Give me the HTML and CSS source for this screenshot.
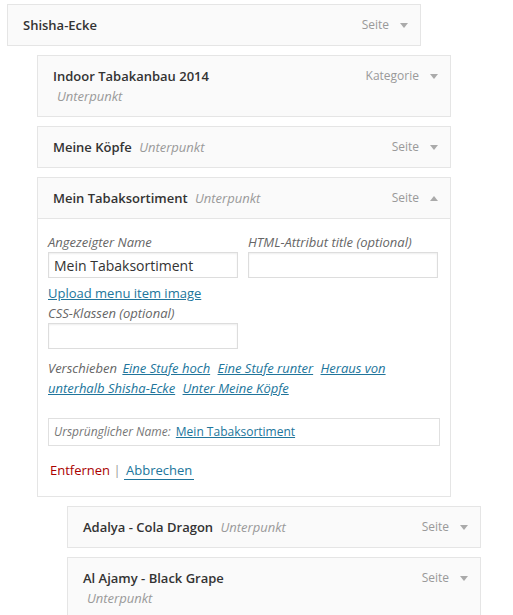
FILE: index.html
```html
<!DOCTYPE html>
<html lang="de">
<head>
    <meta charset="UTF-8">
    <meta name="viewport" content="width=device-width, initial-scale=1.0">
    <title>Menüs</title>
    <link rel="stylesheet" href="styles.css">
</head>
<body>
    <!-- Menüstruktur -->
    <ul class="menu">
        <li class="menu-item depth-0">
            <div class="item-bar">
                <span class="item-title">Shisha-Ecke</span>
                <span class="item-controls"><span class="item-type">Seite</span><span class="item-edit"></span></span>
            </div>
        </li>
        <li class="menu-item depth-1">
            <div class="item-bar">
                <span class="item-title">Indoor Tabakanbau 2014 <span class="is-submenu">Unterpunkt</span></span>
                <span class="item-controls"><span class="item-type">Kategorie</span><span class="item-edit"></span></span>
            </div>
        </li>
        <li class="menu-item depth-1">
            <div class="item-bar">
                <span class="item-title">Meine Köpfe <span class="is-submenu">Unterpunkt</span></span>
                <span class="item-controls"><span class="item-type">Seite</span><span class="item-edit"></span></span>
            </div>
        </li>
        <li class="menu-item depth-1">
            <div class="item-bar">
                <span class="item-title">Mein Tabaksortiment <span class="is-submenu">Unterpunkt</span></span>
                <span class="item-controls"><span class="item-type">Seite</span><span class="item-edit up"></span></span>
            </div>

            <!-- Einstellungen des geöffneten Eintrags -->
            <div class="item-settings">
                <div class="field-row">
                    <label class="field">
                        <span class="field-label">Angezeigter Name</span>
                        <input type="text" class="text-input" value="Mein Tabaksortiment">
                    </label>
                    <label class="field">
                        <span class="field-label">HTML-Attribut title (optional)</span>
                        <input type="text" class="text-input" value="">
                    </label>
                </div>
                <a href="#" class="upload-link">Upload menu item image</a>
                <label class="field">
                    <span class="field-label">CSS-Klassen (optional)</span>
                    <input type="text" class="text-input" value="">
                </label>
                <p class="field-move">
                    <span>Verschieben</span>
                    <a href="#">Eine Stufe hoch</a>
                    <a href="#">Eine Stufe runter</a>
                    <a href="#">Heraus von unterhalb Shisha-Ecke</a>
                    <a href="#">Unter Meine Köpfe</a>
                </p>
                <p class="link-to-original">
                    Ursprünglicher Name: <a href="#">Mein Tabaksortiment</a>
                </p>
                <p class="item-actions">
                    <a href="#" class="item-delete">Entfernen</a>
                    <span class="sep">|</span>
                    <a href="#" class="item-cancel">Abbrechen</a>
                </p>
            </div>
        </li>
        <li class="menu-item depth-2">
            <div class="item-bar">
                <span class="item-title">Adalya - Cola Dragon <span class="is-submenu">Unterpunkt</span></span>
                <span class="item-controls"><span class="item-type">Seite</span><span class="item-edit"></span></span>
            </div>
        </li>
        <li class="menu-item depth-2">
            <div class="item-bar">
                <span class="item-title">Al Ajamy - Black Grape <span class="is-submenu">Unterpunkt</span></span>
                <span class="item-controls"><span class="item-type">Seite</span><span class="item-edit"></span></span>
            </div>
        </li>
    </ul>
</body>
</html>
```

FILE: styles.css
```css
/* Menü-Editor */
* {
    box-sizing: border-box;
}
body {
    margin: 0;
    font-family: "Open Sans", sans-serif;
    font-size: 13px;
    color: #333;
    background: #fff;
}
a {
    color: #21759b;
}
.menu {
    list-style: none;
    margin: 0;
    padding: 4px 0 0 7px;
}
.menu-item {
    width: 414px;
    margin-bottom: 9px;
}
.depth-1 {
    margin-left: 30px;
}
.depth-2 {
    margin-left: 60px;
}

/* Kopfzeile eines Eintrags */
.item-bar {
    display: flex;
    align-items: flex-start;
    padding: 10px 12px 10px 15px;
    border: 1px solid #e5e5e5;
    background: #fafafa;
    line-height: 20px;
}
.item-title {
    flex: 1;
    max-width: 208px;
    font-weight: 600;
}
.is-submenu {
    display: inline-block;
    margin-left: 4px;
    font-style: italic;
    font-weight: 400;
    color: #999;
}
.item-controls {
    margin-left: auto;
    display: flex;
    align-items: center;
    height: 20px;
    font-size: 12px;
    color: #999;
}
.item-edit {
    margin-left: 11px;
    width: 0;
    height: 0;
    border-left: 4px solid transparent;
    border-right: 4px solid transparent;
    border-top: 5px solid #aaa;
}
.item-edit.up {
    border-top: 0;
    border-bottom: 5px solid #aaa;
}

/* Einstellungen */
.item-settings {
    border: 1px solid #e5e5e5;
    border-top: 0;
    padding: 13px 10px 16px 10px;
    background: #fff;
}
.field-row {
    display: flex;
    gap: 10px;
}
.field {
    display: block;
    width: 190px;
}
.field-label {
    display: block;
    font-style: italic;
    color: #666;
    line-height: 20px;
}
.text-input {
    display: block;
    width: 190px;
    height: 26px;
    margin: 0;
    padding: 3px 5px;
    border: 1px solid #ddd;
    border-radius: 0;
    box-shadow: inset 0 1px 2px rgba(0, 0, 0, .07);
    font: 14px "Open Sans", sans-serif;
    color: #333;
    background: #fff;
}
.upload-link {
    display: inline-block;
    margin-top: 5px;
    line-height: 20px;
}
.field-move {
    margin: 9px 0 0;
    line-height: 20px;
    font-style: italic;
    color: #666;
}
.field-move a {
    margin: 0 2px;
}
.link-to-original {
    margin: 20px 0 0;
    padding: 3px 5px;
    border: 1px solid #e0e0e0;
    line-height: 20px;
    font-size: 12px;
    font-style: italic;
    color: #777;
}
.link-to-original a {
    font-style: normal;
    margin-left: 2px;
}
.item-actions {
    margin: 14px 0 0;
    padding-left: 2px;
    line-height: 20px;
}
.item-delete {
    color: #a00;
    text-decoration: none;
}
.sep {
    color: #999;
}
.item-cancel {
    text-decoration: none;
    border-bottom: 1px solid #21759b;
    padding: 0 2px;
}
```
